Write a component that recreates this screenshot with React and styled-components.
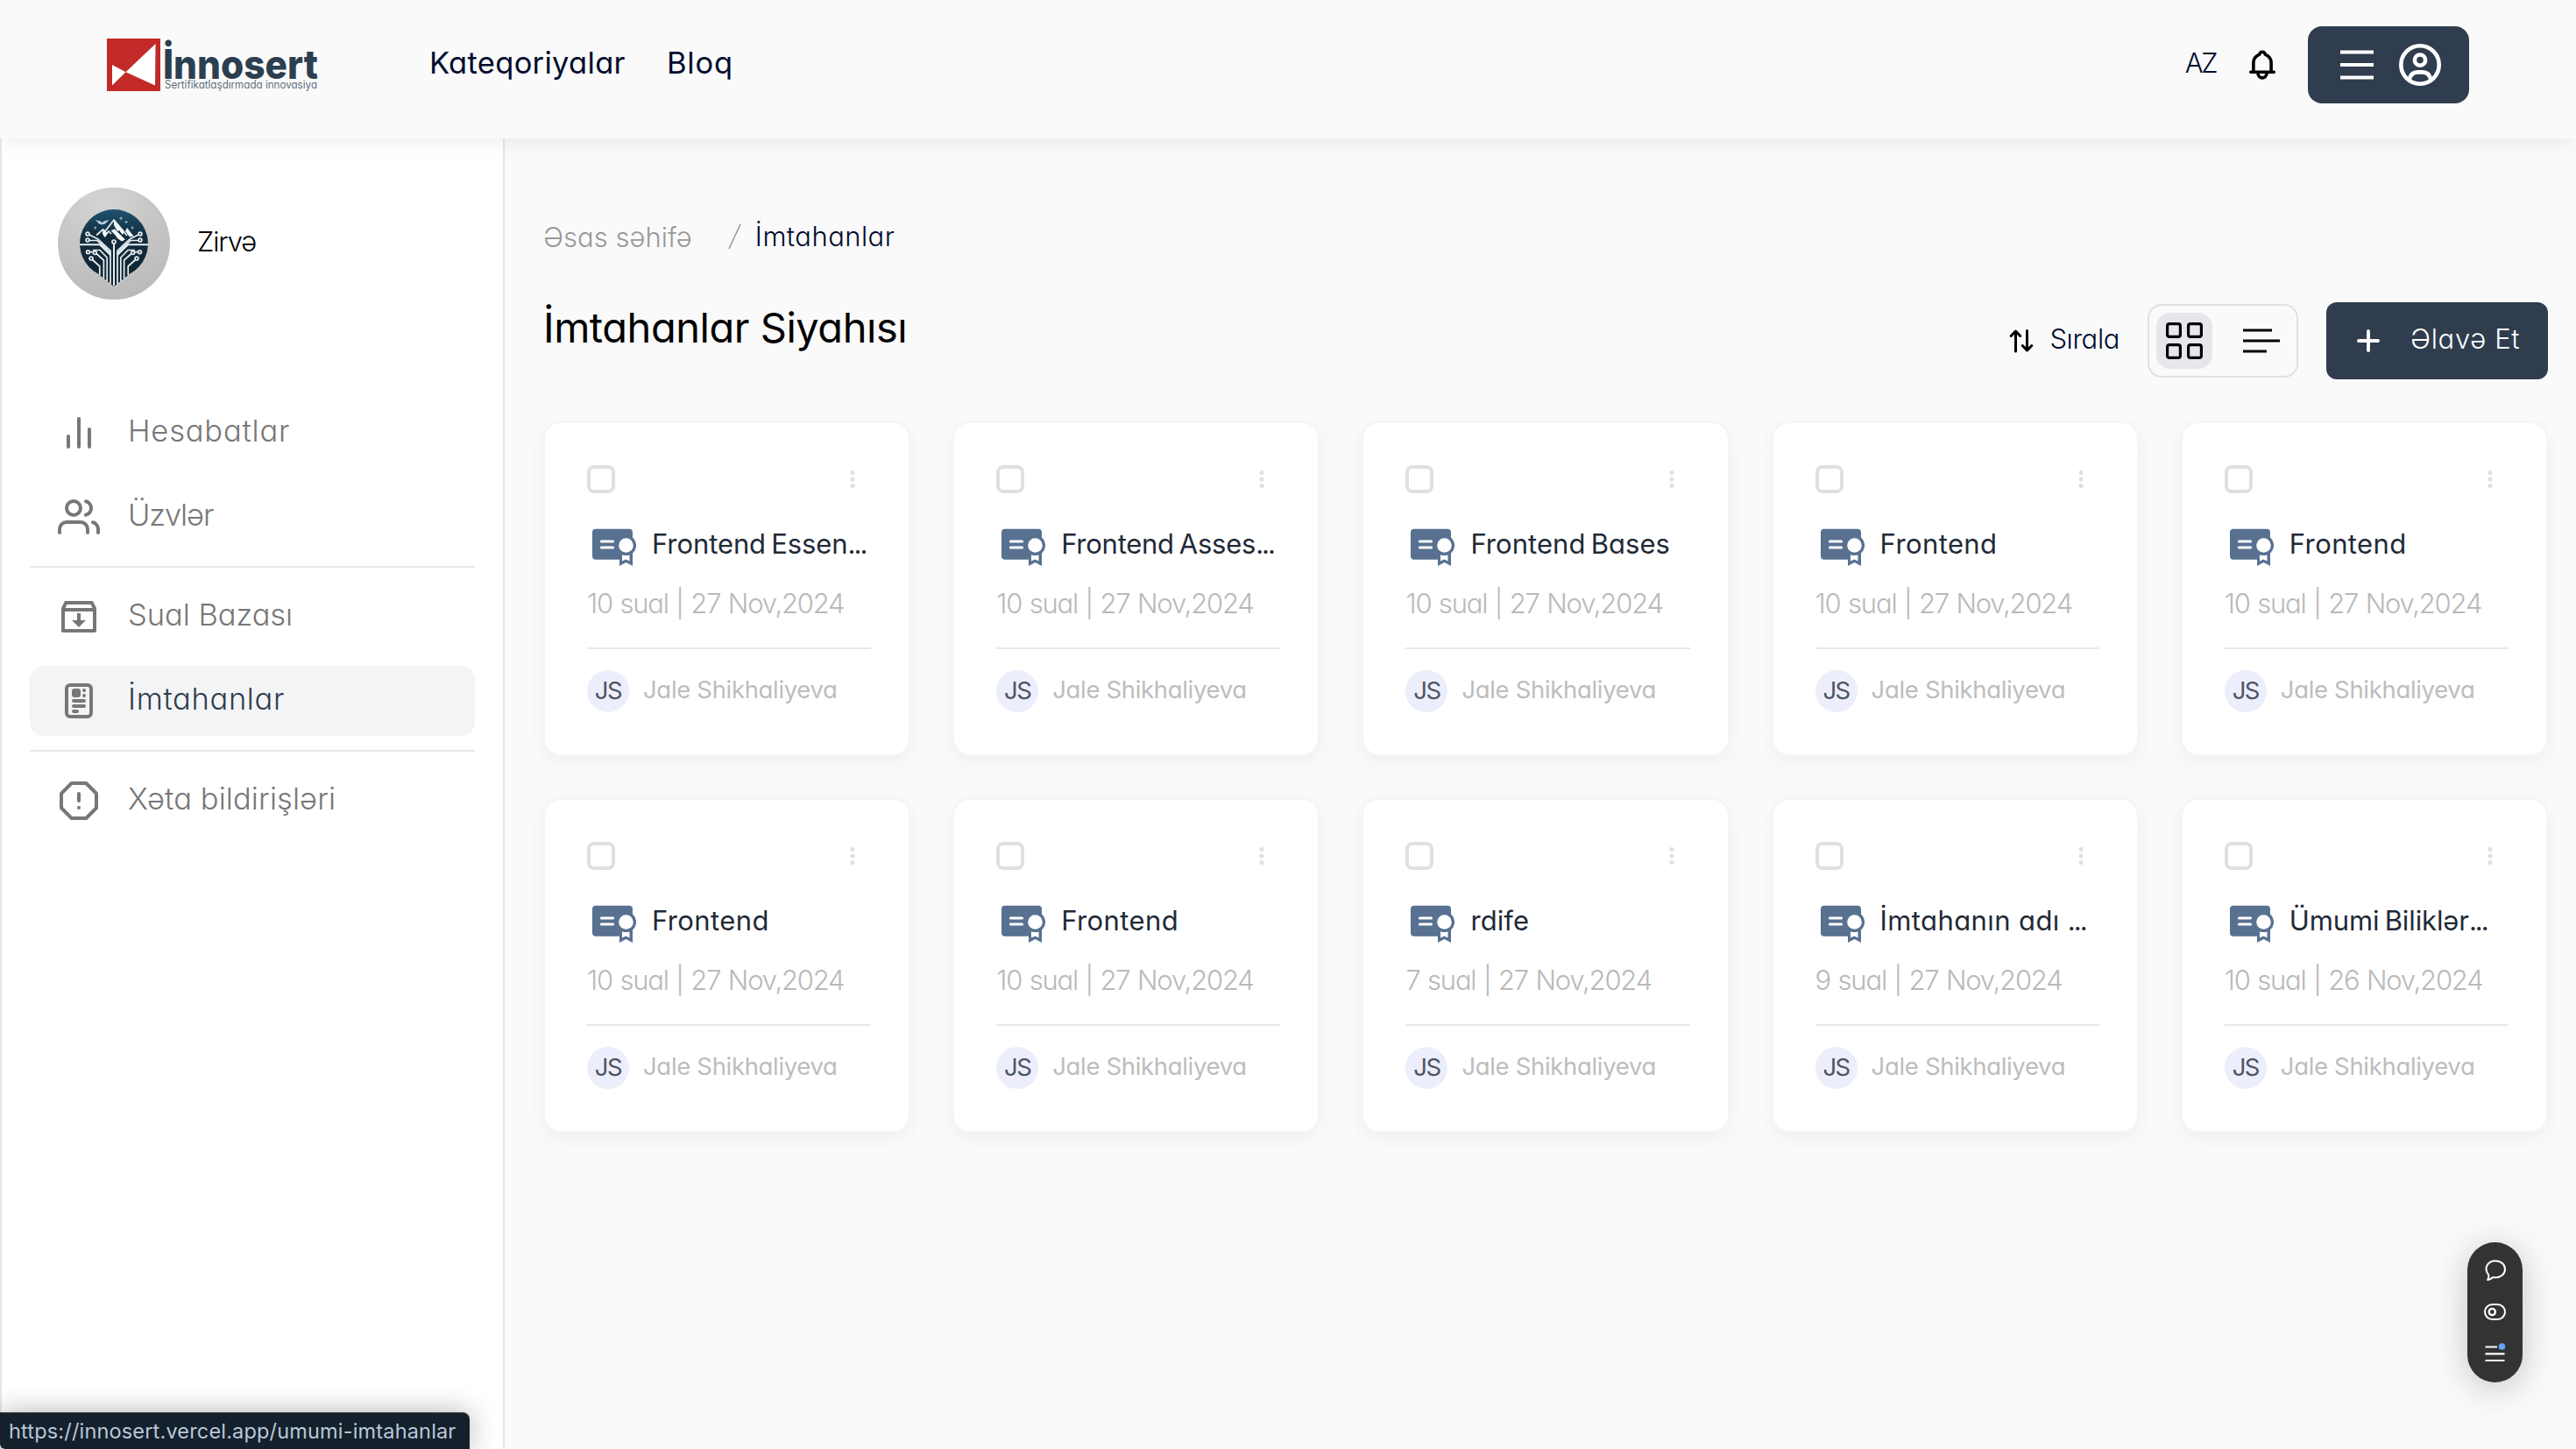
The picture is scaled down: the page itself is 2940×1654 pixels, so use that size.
import React from 'react';
import styled, { createGlobalStyle } from 'styled-components';
import { RiInboxArchiveLine } from 'react-icons/ri';

const GlobalStyle = createGlobalStyle`
  *, *::before, *::after { box-sizing: border-box; }
  body {
    margin: 0;
    background: #fafafa;
    font-family: Inter, 'Open Sans', sans-serif;
    font-feature-settings: 'cv11';
    overflow: hidden;
  }
`;

const Page = styled.div`
  display: flex;
  flex-direction: column;
  width: 100%;
  height: 1654px;
  background: #fafafa;
`;

const Text = styled.span`
  display: block;
  white-space: nowrap;
  font-size: ${(p) => p.$size}px;
  line-height: ${(p) => p.$line || 40}px;
  font-weight: ${(p) => p.$weight || 400};
  letter-spacing: ${(p) => p.$track || 0}px;
  word-spacing: ${(p) => p.$word || 0}px;
  color: ${(p) => p.$color};
  padding-bottom: ${(p) => p.$lift || 0}px;
`;

const Ellipsis = styled.span`
  letter-spacing: -2px;
`;

/* ---------- header ---------- */
const Header = styled.header`
  position: relative;
  z-index: 2;
  flex: none;
  display: flex;
  align-items: center;
  height: 158px;
  padding: 0 122px 10px;
  background: #fafafa;
  box-shadow: 0 10px 18px -4px rgba(40, 70, 70, 0.08);
`;

const LogoSvg = styled.svg`
  flex: none;
  overflow: visible;
`;

const Nav = styled.nav`
  display: flex;
  gap: 47px;
  margin-left: 126px;
`;

const HeaderActions = styled.div`
  display: flex;
  align-items: center;
  margin-left: auto;
`;

const BellButton = styled.span`
  display: flex;
  margin: 0 37px 0 38px;
`;

const AccountButton = styled.div`
  display: flex;
  align-items: center;
  justify-content: space-between;
  width: 184px;
  height: 88px;
  padding: 0 32px 0 37px;
  border-radius: 16px;
  background: #303d4e;
`;

/* ---------- sidebar ---------- */
const Body = styled.div`
  flex: 1;
  display: flex;
  min-height: 0;
`;

const Sidebar = styled.aside`
  flex: none;
  width: 576px;
  padding: 56px 32px 0;
  border: solid #e5e7eb;
  border-width: 0 2px;
  background: #fff;
`;

const Profile = styled.div`
  display: flex;
  align-items: center;
  gap: 31px;
  height: 128px;
  margin-bottom: 112px;
  padding-left: 32px;
`;

const Menu = styled.div`
  display: flex;
  flex-direction: column;
  gap: 16px;
`;

const MenuItem = styled.div`
  display: flex;
  align-items: center;
  gap: 32px;
  height: 80px;
  padding-left: 32px;
  border-radius: 16px;
  background: ${(p) => (p.$active ? '#f3f4f6' : 'transparent')};
  color: #777;
`;

const Divider = styled.div`
  height: 2px;
  background: ${(p) => p.$tone || '#e5e7eb'};
`;

/* ---------- main ---------- */
const Main = styled.main`
  flex: 1;
  min-width: 0;
  padding: 92px 32px 0 44px;
`;

const Breadcrumb = styled.div`
  display: flex;
  height: 40px;
`;

const Slash = styled.span`
  display: flex;
  align-items: center;
  margin: 0 16px 0 41px;
`;

const Toolbar = styled.div`
  display: flex;
  align-items: flex-start;
  justify-content: space-between;
  height: 88px;
  margin: 55px 0 48px;
`;

const ToolGroup = styled.div`
  display: flex;
  align-items: center;
  height: 88px;
`;

const SortButton = styled.div`
  display: flex;
  align-items: center;
  gap: 18px;
  margin-right: 32px;
`;

const ViewSwitch = styled.div`
  display: flex;
  align-items: center;
  justify-content: space-between;
  width: 172px;
  height: 84px;
  margin-right: 32px;
  padding: 0 8px;
  border: 2px solid #e0e0e0;
  border-radius: 16px;
`;

const ViewOption = styled.span`
  display: flex;
  align-items: center;
  justify-content: center;
  width: 64px;
  height: 64px;
  border-radius: 16px;
  background: ${(p) => (p.$active ? '#e5e7eb' : 'transparent')};
`;

const AddButton = styled.div`
  display: flex;
  align-items: center;
  gap: 35px;
  width: 253px;
  height: 88px;
  padding-left: 35px;
  border-radius: 12px;
  background: #303d4e;
`;

const Grid = styled.div`
  display: grid;
  grid-template-columns: repeat(5, 1fr);
  gap: 48px;
`;

const CardBox = styled.article`
  height: 382px;
  padding: 48px 43px 0 48px;
  border: 2px solid #f4f5f5;
  border-radius: 20px;
  background: #fff;
  background-clip: padding-box;
  box-shadow: 0 6px 18px rgba(40, 70, 70, 0.06);
`;

const CardTop = styled.div`
  display: flex;
  align-items: center;
  justify-content: space-between;
  height: 32px;
  padding-right: 18px;
`;

const Checkbox = styled.span`
  width: 32px;
  height: 32px;
  border: 4px solid #e0e0e0;
  border-radius: 8px;
`;

const CardTitle = styled.div`
  display: flex;
  align-items: center;
  gap: 18px;
  height: 44px;
  margin: 40px 0 22px;
  padding-left: 6px;
`;

const CardMeta = styled.div`
  height: 40px;
  margin-bottom: 30px;
`;

const Author = styled.div`
  display: flex;
  align-items: center;
  gap: 16px;
  margin-top: 24px;
`;

const Initials = styled.div`
  display: flex;
  align-items: center;
  justify-content: center;
  width: 48px;
  height: 48px;
  border-radius: 50%;
  background: #eceefb;
`;

/* ---------- overlays ---------- */
const FloatingBar = styled.div`
  position: absolute;
  z-index: 3;
  right: 61px;
  top: 1418px;
  display: flex;
  flex-direction: column;
  align-items: center;
  gap: 26px;
  width: 63px;
  height: 160px;
  padding-top: 20px;
  border-radius: 32px;
  background: #333;
  box-shadow: 0 6px 40px rgba(0, 0, 0, 0.22);
`;

const StatusLink = styled.div`
  position: absolute;
  z-index: 3;
  left: 0;
  top: 1612px;
  display: flex;
  align-items: center;
  width: 536px;
  height: 42px;
  padding-left: 10px;
  border-radius: 0 8px 0 6px;
  border-top: 1px solid #4a4a4a;
  background: #14202c;
  box-shadow: 0 0 32px rgba(0, 0, 0, 0.3);
  font-feature-settings: normal;
`;

/* ---------- drawings ---------- */
const Logo = () => (
  <LogoSvg width="242" height="60" viewBox="0 0 242 60">
    <rect width="61" height="60" fill="#c22a2a" />
    <path d="M55.5 6 L55 53.5 L21.5 38.2 Z M6 30 L21.5 38.2 L6 53.5 Z" fill="#fff" />
    <text x="64" y="45.6" fontSize="46" fontWeight="800" fill="#2c3f50" textLength="177" lengthAdjust="spacingAndGlyphs">İnnosert</text>
    <text x="66" y="56.600" fontSize="12.500" fontWeight="400" fill="#61707d" textLength="174" lengthAdjust="spacingAndGlyphs">Sertifikatlaşdırmada innovasiya</text>
  </LogoSvg>
);

const BellIcon = () => (
  <svg width="30" height="34" viewBox="0 0 30 34" fill="none" stroke="#000" strokeWidth="3.6" strokeLinejoin="round" strokeLinecap="round">
    <path d="M4.9 25 V14.5 C4.9 9.5 7.6 7 11.6 5.2 C12.6 1.2 17.4 1.2 18.4 5.2 C22.4 7 25.1 9.5 25.1 14.5 V25" />
    <path d="M1.8 25.3 H28.2" />
    <path d="M9.8 26 C10.4 33.8 19.6 33.8 20.2 26" />
  </svg>
);

const MenuLines = () => (
  <svg width="38" height="34" viewBox="0 0 38 34" fill="none" stroke="#fff" strokeWidth="4">
    <path d="M0 2.5 H38 M0 17 H38 M0 31.5 H38" />
  </svg>
);

const UserIcon = () => (
  <svg width="48" height="48" viewBox="0 0 48 48" fill="none" stroke="#fff" strokeWidth="4.6">
    <circle cx="24" cy="24" r="21.7" />
    <circle cx="24" cy="18.6" r="6.1" />
    <path d="M11.8 41 C13 35 16.5 32.4 21 32.4 H27 C31.5 32.4 35 35 36.2 41" />
  </svg>
);

const Stroke24 = ({ children }) => (
  <svg width="48" height="48" viewBox="0 0 24 24" fill="none" stroke="currentColor" strokeWidth="2" strokeLinecap="round" strokeLinejoin="round">
    {children}
  </svg>
);

const ChartIcon = () => (
  <Stroke24><path d="M18 20V10 M12 20V4 M6 20v-6" /></Stroke24>
);

const UsersIcon = () => (
  <Stroke24>
    <path d="M17 21v-2a4 4 0 0 0-4-4H5a4 4 0 0 0-4 4v2" />
    <circle cx="9" cy="7" r="4" />
    <path d="M23 21v-2a4 4 0 0 0-3-3.87 M16 3.13a4 4 0 0 1 0 7.75" />
  </Stroke24>
);

const AlertIcon = () => (
  <Stroke24>
    <path d="M7.86 2h8.28L22 7.86v8.28L16.14 22H7.86L2 16.14V7.86z M12 8v4 M12 16h.01" />
  </Stroke24>
);

const ExamIcon = () => (
  <svg width="48" height="48" viewBox="0 0 48 48" fill="currentColor">
    <rect x="10" y="6" width="28" height="36" rx="4" fill="none" stroke="currentColor" strokeWidth="4" />
    <rect x="16" y="10" width="10" height="10" rx="3" />
    <circle cx="30" cy="12" r="2" />
    <circle cx="30" cy="18" r="2" />
    <rect x="16" y="22" width="16" height="4" rx="2" />
    <rect x="16" y="28" width="16" height="4" rx="2" />
    <rect x="16" y="34" width="8" height="4" rx="2" />
  </svg>
);

const traces = (
  <>
    <path d="M36 54 L46 59 L60 72 V110" />
    <path d="M36 60.5 H45 L56.5 71 L60 75" />
    <path d="M25 65.3 H48 L60 77" strokeWidth="2" />
    <path d="M40 71.5 H48 L56.2 80 V107" />
    <path d="M44 75.5 L52.4 83 V104" />
    <path d="M36.5 73.7 H41 M39.5 82.5 L47.8 90 V100" />
    <circle cx="34" cy="53" r="1.9" />
    <circle cx="34" cy="60" r="1.9" />
    <circle cx="34.5" cy="73.7" r="1.9" />
    <circle cx="42.3" cy="74.6" r="1.9" />
    <circle cx="38" cy="81" r="1.9" />
  </>
);

const Avatar = () => (
  <svg width="128" height="128" viewBox="0 0 128 128">
    <defs>
      <radialGradient id="disc" cx="0.4" cy="0.15" r="1">
        <stop offset="0" stopColor="#d4d4d2" />
        <stop offset="1" stopColor="#b6b6b6" />
      </radialGradient>
      <linearGradient id="night" x1="0" y1="0" x2="0" y2="1">
        <stop offset="0" stopColor="#1f5270" />
        <stop offset="0.35" stopColor="#122c3e" />
        <stop offset="1" stopColor="#0f2430" />
      </linearGradient>
    </defs>
    <circle cx="64" cy="64" r="64" fill="url(#disc)" />
    <path d="M64 25 A39 39 0 0 1 82.5 98.3 L64 113 L45.5 98.3 A39 39 0 0 1 64 25 Z" fill="url(#night)" />
    <g fill="none" stroke="#e9eef0" strokeWidth="1.7" strokeLinejoin="round">
      {traces}
      <g transform="translate(128 0) scale(-1 1)">{traces}</g>
      <path d="M64 64.5 V112" strokeWidth="2" />
      <circle cx="64" cy="62" r="2" />
      <path d="M44 54.5 L51.5 48 L54 50 L64 37 L79 55" />
      <path d="M53 56 L58 50 L61 53" />
    </g>
    <path d="M64 37 L76 50 L74 54 L70 49 L68 50 L64 43 Z M60.5 49 L65 47.5 L77 59.5 L73 61.5 L68 58 L66 55 Z M51.5 48 L57 52 L54 57 L51 53 Z M79 46 L86.5 55.5 L82 56.5 L77 50 Z" fill="#f4f7f8" />
    <path d="M43 37 L48 38.2 L50.5 40 L53 38.2 L58.5 37 L54 41.5 L50.5 42.6 L47 41.5 Z" fill="#b8ccd6" />
    <path d="M72 33.5 V37 M70.3 35.2 H73.7 M78 38 V41 M76.5 39.5 H79.5 M42.7 44.5 V47.5 M41.2 46 H44.2 M85 44.5 V47.5 M83.5 46 H86.5" stroke="#a9c3d0" strokeWidth="1" />
  </svg>
);

const SortIcon = () => (
  <svg width="28" height="28" viewBox="0 0 28 28" fill="none" stroke="#000" strokeWidth="3" strokeLinecap="round" strokeLinejoin="round">
    <path d="M7.5 26 V3.5 M2.2 8.5 L7.5 3 L12.7 8.5" />
    <path d="M20.5 2.5 V24.5 M15.300 19.5 L20.5 25 L25.800 19.5" />
  </svg>
);

const GridIcon = () => (
  <svg width="42" height="42" viewBox="0 0 42 42" fill="none" stroke="#000" strokeWidth="3.2">
    <rect x="1.6" y="1.6" width="14.8" height="14.8" rx="2.5" />
    <rect x="25.6" y="1.6" width="14.8" height="14.8" rx="2.5" />
    <rect x="1.6" y="25.6" width="14.8" height="14.8" rx="2.5" />
    <rect x="25.6" y="25.6" width="14.8" height="14.8" rx="2.5" />
  </svg>
);

const ListIcon = () => (
  <svg width="42" height="28" viewBox="0 0 42 28" fill="none" stroke="#000" strokeWidth="3">
    <path d="M0 2 H33 M0 14 H42 M0 26 H27" />
  </svg>
);

const PlusIcon = () => (
  <svg width="26" height="26" viewBox="0 0 26 26" fill="none" stroke="#fff" strokeWidth="3.8" strokeLinecap="round">
    <path d="M13 2 V24 M2 13 H24" />
  </svg>
);

const DotsIcon = () => (
  <svg width="6" height="20" viewBox="0 0 6 20" fill="#e0e0e0">
    <circle cx="3" cy="2.5" r="2.5" />
    <circle cx="3" cy="10" r="2.5" />
    <circle cx="3" cy="17.5" r="2.5" />
  </svg>
);

const CertificateIcon = () => (
  <svg width="50" height="44" viewBox="0 0 50 44">
    <path d="M4 0.7 H42 a4 4 0 0 1 4 4 V43 L38.5 39 L31 43 V35.7 H4 a4 4 0 0 1 -4 -4 V4.7 a4 4 0 0 1 4 -4 Z" fill="#587191" />
    <path d="M10.5 15 H23.5 M10.5 22 H23.5" stroke="#fff" strokeWidth="3.2" strokeLinecap="round" />
    <path d="M34 27 H42.5 V37.6 L38.3 35.6 L34 37.6 Z" fill="#fff" />
    <circle cx="38.5" cy="19.5" r="11.6" fill="#587191" />
    <circle cx="38.5" cy="19.5" r="8.3" fill="#fff" />
  </svg>
);

const ChatIcon = () => (
  <svg width="24" height="24" viewBox="0 0 24 24" fill="none" stroke="#fff" strokeWidth="2" strokeLinejoin="round">
    <path d="M4.2 17.2 C-1.8 10 3 1.2 12 1.2 C18.5 1.2 23 5.4 23 10.7 C23 16.5 18 20.3 11.5 20.3 C10.6 20.3 9.8 20.2 9 20 C7.5 21.6 5.5 22.6 3.2 22.9 C4.2 21.2 4.5 19.3 4.2 17.2 Z" />
  </svg>
);

const ToggleIcon = () => (
  <svg width="25" height="19" viewBox="0 0 25 19" fill="none" stroke="#fff">
    <rect x="1" y="1" width="23" height="17" rx="8.5" strokeWidth="2" />
    <circle cx="9.3" cy="9.5" r="3.6" strokeWidth="2.4" />
  </svg>
);

const FeedIcon = () => (
  <svg width="25" height="22" viewBox="0 0 25 22">
    <path d="M1.5 4.5 H15 M1.5 12.3 H23.5 M1.5 20 H23.5" stroke="#fff" strokeWidth="2.2" />
    <circle cx="20.5" cy="4" r="3.8" fill="#60a5fa" />
  </svg>
);

/* ---------- data ---------- */
const menu = [
  { label: 'Hesabatlar', icon: <ChartIcon />, track: 0.8 },
  { label: 'Üzvlər', icon: <UsersIcon />, track: -1.1 },
  'divider',
  { label: 'Sual Bazası', icon: <RiInboxArchiveLine size={48} />, track: -0.05 },
  { label: 'İmtahanlar', icon: <ExamIcon />, track: 0.65, active: true },
  'divider',
  { label: 'Xəta bildirişləri', icon: <AlertIcon />, track: 0.1 },
];

const exams = [
  { title: 'Frontend Essen', cut: true, track: -0.08, word: -2.5, meta: '10 sual | 27 Nov,2024' },
  { title: 'Frontend Asses', cut: true, track: -0.25, word: -2.5, meta: '10 sual | 27 Nov,2024' },
  { title: 'Frontend Bases', track: 0.05, word: -2.5, meta: '10 sual | 27 Nov,2024' },
  { title: 'Frontend', track: 0.4, meta: '10 sual | 27 Nov,2024' },
  { title: 'Frontend', track: 0.4, meta: '10 sual | 27 Nov,2024' },
  { title: 'Frontend', track: 0.4, meta: '10 sual | 27 Nov,2024' },
  { title: 'Frontend', track: 0.4, meta: '10 sual | 27 Nov,2024' },
  { title: 'rdife', track: 0.1, meta: '7 sual | 27 Nov,2024' },
  { title: 'İmtahanın adı ', cut: true, track: 0.4, meta: '9 sual | 27 Nov,2024' },
  { title: 'Ümumi Biliklər', cut: true, track: -0.1, word: -2.5, meta: '10 sual | 26 Nov,2024' },
];

const ExamCard = ({ title, cut, track, word, meta }) => (
  <CardBox>
    <CardTop>
      <Checkbox />
      <DotsIcon />
    </CardTop>
    <CardTitle>
      <CertificateIcon />
      <Text $size={31} $track={track} $word={word} $color="#1f2a37" $lift={8}>
        {title}
        {cut && <Ellipsis>...</Ellipsis>}
      </Text>
    </CardTitle>
    <CardMeta>
      <Text $size={31} $weight={300} $track={-1.2} $word={1} $color="#b9b9b9">{meta}</Text>
    </CardMeta>
    <Divider $tone="#e8e8e8" />
    <Author>
      <Initials>
        <Text $size={27.5} $track={-1.5} $color="#4b5563" $lift={3}>JS</Text>
      </Initials>
      <Text $size={27.5} $track={-0.33} $color="#bdbdbd" $lift={4}>Jale Shikhaliyeva</Text>
    </Author>
  </CardBox>
);

export default function App() {
  return (
    <Page>
      <GlobalStyle />
      <Header>
        <Logo />
        <Nav>
          <Text $size={34.5} $track={0.3} $color="#000c2e" $lift={5}>Kateqoriyalar</Text>
          <Text $size={34.5} $track={0.8} $color="#000c2e" $lift={5}>Bloq</Text>
        </Nav>
        <HeaderActions>
          <Text $size={31} $weight={300} $track={-2.5} $color="#000c2e" $lift={4}>AZ</Text>
          <BellButton><BellIcon /></BellButton>
          <AccountButton>
            <MenuLines />
            <UserIcon />
          </AccountButton>
        </HeaderActions>
      </Header>
      <Body>
        <Sidebar>
          <Profile>
            <Avatar />
            <Text $size={31} $weight={350} $track={-1.1} $color="#000" $lift={4}>Zirvə</Text>
          </Profile>
          <Menu>
            {menu.map((item, i) =>
              item === 'divider' ? (
                <Divider key={i} />
              ) : (
                <MenuItem key={i} $active={item.active}>
                  {item.icon}
                  <Text $size={34.5} $weight={300} $track={item.track} $color={item.active ? '#303d4e' : '#777'} $lift={5}>{item.label}</Text>
                </MenuItem>
              )
            )}
          </Menu>
        </Sidebar>
        <Main>
          <Breadcrumb>
            <Text $size={31} $weight={300} $color="#999" $line={41}>Əsas səhifə</Text>
            <Slash>
              <svg width="15" height="30" viewBox="0 0 15 30" fill="none" stroke="#999" strokeWidth="1.6">
                <path d="M1 29 L14 1" />
              </svg>
            </Slash>
            <Text $size={31} $weight={350} $track={0.45} $color="#000c2e" $line={39}>İmtahanlar</Text>
          </Breadcrumb>
          <Toolbar>
            <Text $size={47} $track={-0.47} $color="#000" $line={57}>İmtahanlar Siyahısı</Text>
            <ToolGroup>
              <SortButton>
                <SortIcon />
                <Text $size={31} $weight={350} $track={-0.4} $color="#000c2e" $lift={4}>Sırala</Text>
              </SortButton>
              <ViewSwitch>
                <ViewOption $active><GridIcon /></ViewOption>
                <ViewOption><ListIcon /></ViewOption>
              </ViewSwitch>
              <AddButton>
                <PlusIcon />
                <Text $size={31} $weight={300} $track={0.65} $color="#fff" $lift={4}>Əlavə Et</Text>
              </AddButton>
            </ToolGroup>
          </Toolbar>
          <Grid>
            {exams.map((exam, i) => <ExamCard key={i} {...exam} />)}
          </Grid>
        </Main>
      </Body>
      <FloatingBar>
        <ChatIcon />
        <ToggleIcon />
        <FeedIcon />
      </FloatingBar>
      <StatusLink>
        <Text $size={23.5} $track={0.17} $color="#b9c8d8">https://innosert.vercel.app/umumi-imtahanlar</Text>
      </StatusLink>
    </Page>
  );
}
